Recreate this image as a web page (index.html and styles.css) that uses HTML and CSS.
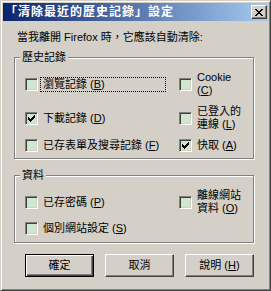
FILE: index.html
```html
<!DOCTYPE html>
<html lang="zh-Hant">
<head>
    <meta charset="UTF-8">
    <title>「清除最近的歷史記錄」設定</title>
    <link rel="stylesheet" href="styles.css">
</head>
<body>
    <div class="window">
        <div class="titlebar">
            <span class="title">「清除最近的歷史記錄」設定</span>
            <span class="close">
                <svg width="8" height="7" viewBox="0 0 8 7" shape-rendering="crispEdges">
                    <path d="M0 0h2v1h-2z M6 0h2v1h-2z M1 1h2v1h-2z M5 1h2v1h-2z M2 2h4v1h-4z M3 3h2v1h-2z M2 4h4v1h-4z M1 5h2v1h-2z M5 5h2v1h-2z M0 6h2v1h-2z M6 6h2v1h-2z" fill="#000"/>
                </svg>
            </span>
        </div>
        <div class="content">
            <p class="prompt">當我離開 Firefox 時，它應該自動清除:</p>

            <div class="group history">
                <span class="group-title">歷史記錄</span>
                <div class="grid">
                    <div class="check"><span class="box"></span><span class="label focus">瀏覽記錄 (<u>B</u>)</span></div>
                    <div class="check"><span class="box"></span><span class="label">Cookie<br>(<u>C</u>)</span></div>
                    <div class="check">
                        <span class="box">
                            <svg width="7" height="7" viewBox="0 0 7 7" shape-rendering="crispEdges"><path d="M0 2h1v3h-1z M1 3h1v3h-1z M2 4h1v3h-1z M3 3h1v3h-1z M4 2h1v3h-1z M5 1h1v3h-1z M6 0h1v3h-1z" fill="#000"/></svg>
                        </span>
                        <span class="label">下載記錄 (<u>D</u>)</span>
                    </div>
                    <div class="check"><span class="box"></span><span class="label">已登入的<br>連線 (<u>L</u>)</span></div>
                    <div class="check"><span class="box"></span><span class="label">已存表單及搜尋記錄 (<u>F</u>)</span></div>
                    <div class="check">
                        <span class="box">
                            <svg width="7" height="7" viewBox="0 0 7 7" shape-rendering="crispEdges"><path d="M0 2h1v3h-1z M1 3h1v3h-1z M2 4h1v3h-1z M3 3h1v3h-1z M4 2h1v3h-1z M5 1h1v3h-1z M6 0h1v3h-1z" fill="#000"/></svg>
                        </span>
                        <span class="label">快取 (<u>A</u>)</span>
                    </div>
                </div>
            </div>

            <div class="group data">
                <span class="group-title">資料</span>
                <div class="grid">
                    <div class="check"><span class="box"></span><span class="label">已存密碼 (<u>P</u>)</span></div>
                    <div class="check"><span class="box"></span><span class="label">離線網站<br>資料 (<u>O</u>)</span></div>
                    <div class="check"><span class="box"></span><span class="label">個別網站設定 (<u>S</u>)</span></div>
                </div>
            </div>

            <div class="buttons">
                <button class="default">確定</button>
                <button>取消</button>
                <button>說明 (<u>H</u>)</button>
            </div>
        </div>
    </div>
</body>
</html>
```

FILE: styles.css
```css
body {
    margin: 0;
    font-family: "Liberation Sans", "Noto Sans CJK TC", sans-serif;
    font-size: 11px;
    line-height: 13px;
    color: #000;
}
.window {
    width: 271px;
    height: 291px;
    box-sizing: border-box;
    background: #d4d0c8;
    border: 1px solid;
    border-color: #d4d0c8 #404040 #404040 #d4d0c8;
    box-shadow: inset 1px 1px #fff, inset -1px -1px #808080;
    padding: 2px;
}
.titlebar {
    height: 18px;
    display: flex;
    align-items: center;
    padding: 0 1px 0 2px;
    background: linear-gradient(to right, #0a246a, #a6caf0);
}
.title {
    color: #fff;
    font-weight: bold;
    font-size: 12px;
    letter-spacing: 1px;
    line-height: 14px;
}
.close {
    margin-left: auto;
    width: 16px;
    height: 14px;
    box-sizing: border-box;
    display: flex;
    align-items: center;
    justify-content: center;
    background: #d4d0c8;
    border: 1px solid;
    border-color: #fff #404040 #404040 #fff;
    box-shadow: inset -1px -1px #808080;
}
.content {
    padding: 10px 14px 0 11px;
}
.prompt {
    margin: 0 0 13px;
    padding-left: 3px;
}
.group {
    position: relative;
    border: 1px solid #808080;
    box-shadow: inset 1px 1px #fff, 1px 1px #fff;
    padding: 13px 0 6px 10px;
}
.group.data {
    margin-top: 16px;
    padding-bottom: 7px;
}
.group-title {
    position: absolute;
    top: -7px;
    left: 5px;
    padding: 0 2px;
    background: #d4d0c8;
}
.grid {
    display: grid;
    grid-template-columns: 141px auto;
    column-gap: 13px;
    row-gap: 8px;
    align-items: center;
}
.data .grid {
    row-gap: 7px;
}
.check {
    display: flex;
    align-items: center;
}
.box {
    width: 13px;
    height: 13px;
    flex: none;
    box-sizing: border-box;
    display: flex;
    align-items: center;
    justify-content: center;
    background: #cde8cd;
    border: 1px solid;
    border-color: #808080 #fff #fff #808080;
    box-shadow: inset 1px 1px #404040, inset -1px -1px #d4d0c8;
}
.label {
    margin-left: 2px;
    padding: 0 3px;
    white-space: nowrap;
}
.label.focus {
    flex: 1;
    border: 1px dotted #000;
    padding: 0 2px;
    margin-top: -1px;
    margin-bottom: -1px;
}
.buttons {
    display: flex;
    justify-content: space-between;
    margin: 11px 0 0 11px;
}
button {
    width: 69px;
    height: 23px;
    box-sizing: border-box;
    padding: 0;
    font: inherit;
    color: #000;
    background: #d4d0c8;
    border: 1px solid;
    border-color: #fff #404040 #404040 #fff;
    box-shadow: inset -1px -1px #808080;
}
button.default {
    border-color: #000;
    box-shadow: inset 1px 1px #fff, inset -1px -1px #404040, inset -2px -2px #808080;
}
```
